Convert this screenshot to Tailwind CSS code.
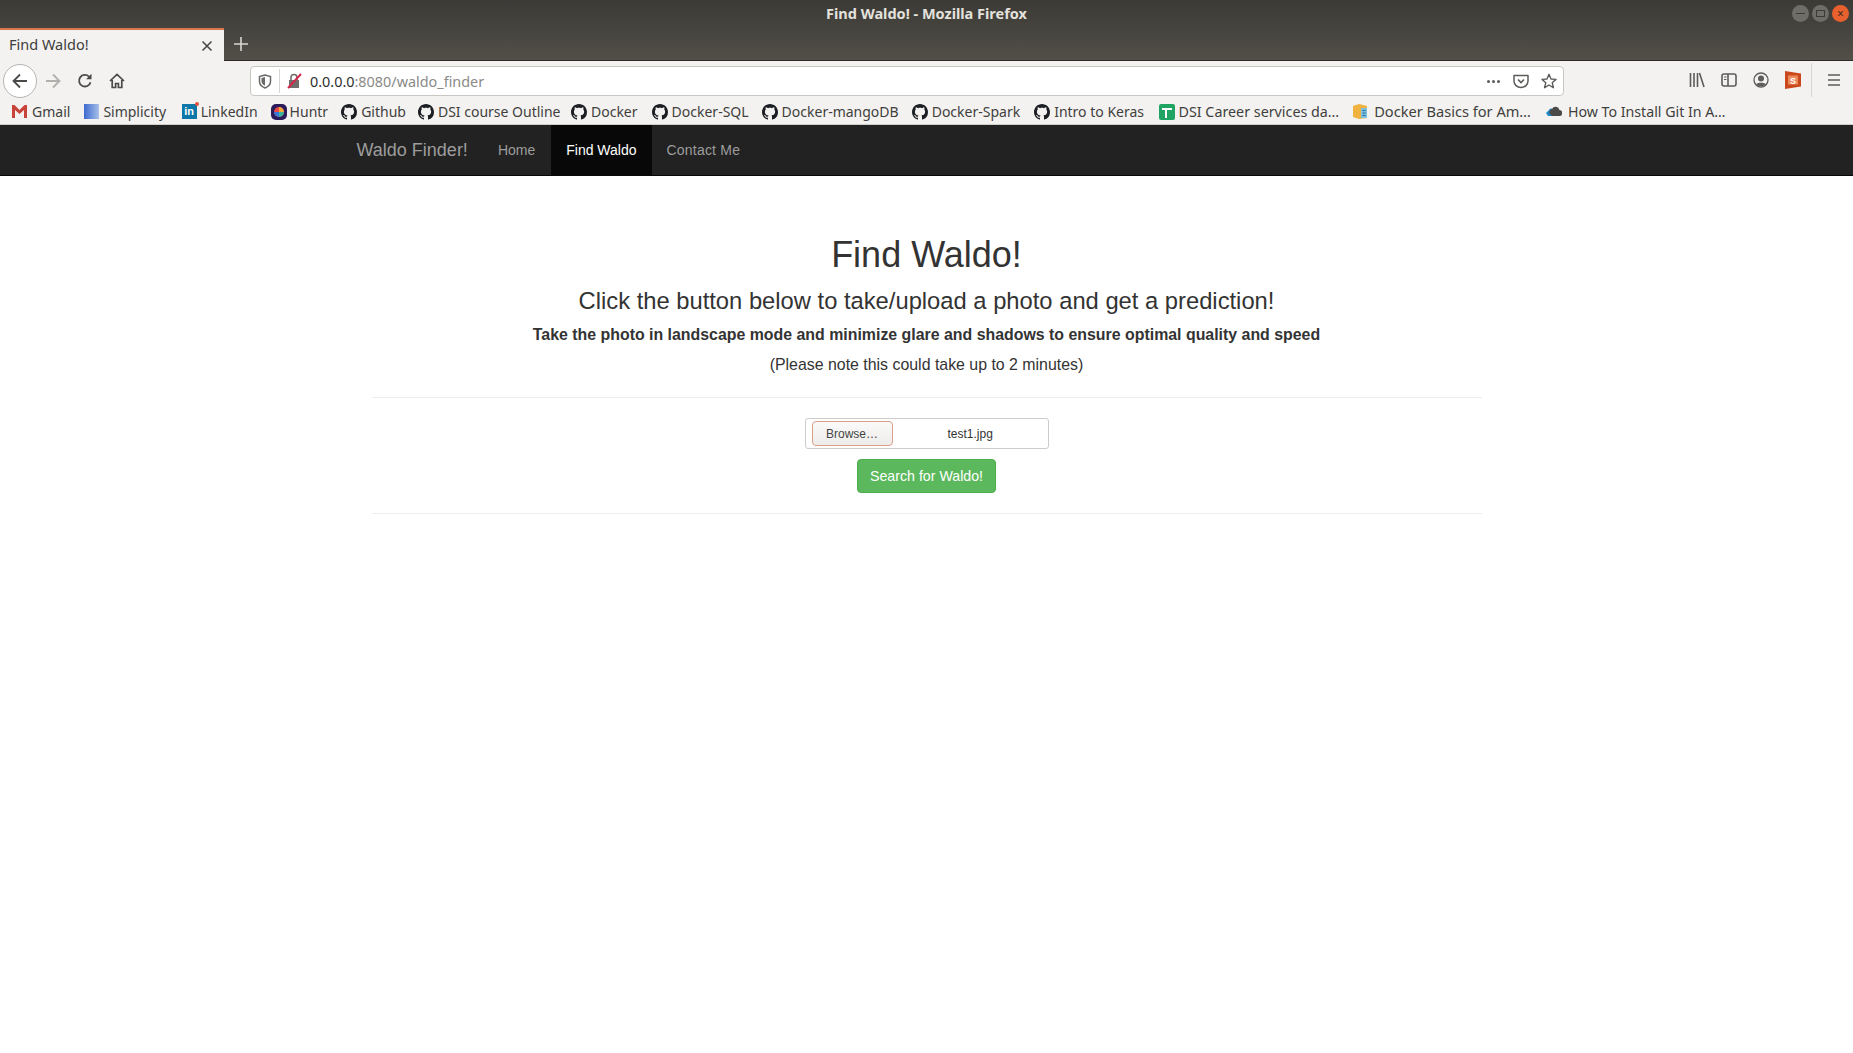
<!DOCTYPE html>
<html lang="en">
  <head>
    <meta charset="UTF-8" />
    <meta name="viewport" content="width=device-width, initial-scale=1.0" />
    <script src="https://cdn.jsdelivr.net/npm/@tailwindcss/browser@4"></script>
    <title>Find Waldo!</title>
  </head>
  <body class="bg-white overflow-hidden [font-family:'Liberation_Sans',sans-serif]">
    <svg class="hidden">
      <symbol id="gh" viewBox="0 0 16 16">
        <path fill="#1b1f23" d="M8 0C3.58 0 0 3.58 0 8c0 3.54 2.29 6.53 5.47 7.59.4.07.55-.17.55-.38 0-.19-.01-.82-.01-1.49-2.01.37-2.53-.49-2.69-.94-.09-.23-.48-.94-.82-1.13-.28-.15-.68-.52-.01-.53.63-.01 1.08.58 1.23.82.72 1.21 1.87.87 2.33.66.07-.52.28-.87.51-1.07-1.78-.2-3.64-.89-3.64-3.95 0-.87.31-1.59.82-2.15-.08-.2-.36-1.02.08-2.12 0 0 .67-.21 2.2.82.64-.18 1.32-.27 2-.27.68 0 1.36.09 2 .27 1.53-1.04 2.2-.82 2.2-.82.44 1.1.16 1.92.08 2.12.51.56.82 1.27.82 2.15 0 3.07-1.87 3.75-3.65 3.95.29.25.54.73.54 1.48 0 1.07-.01 1.93-.01 2.2 0 .21.15.46.55.38A8.013 8.013 0 0016 8c0-4.42-3.58-8-8-8z"/>
      </symbol>
    </svg>

    <!-- browser chrome -->
    <div class="h-[125px] [font-family:'Noto_Sans',sans-serif]">
      <!-- title bar + tabs -->
      <div class="relative h-[61px] bg-linear-to-b from-[#3b3a36] to-[#524f48] border-b border-[#2c2b28]">
        <p class="absolute top-0 inset-x-0 h-[27px] leading-[27px] text-center text-[14.5px] font-bold text-[#e4e2dc]">Find Waldo! - Mozilla Firefox</p>
        <div class="absolute right-[4px] top-[5px] flex gap-[3px]">
          <div class="w-[17px] h-[17px] rounded-full bg-[#6f6d67] flex items-center justify-center"><div class="w-[9px] h-[1.5px] bg-[#3c3b37]"></div></div>
          <div class="w-[17px] h-[17px] rounded-full bg-[#6f6d67] flex items-center justify-center"><div class="w-[9px] h-[7px] border border-[#3c3b37]"></div></div>
          <div class="w-[17px] h-[17px] rounded-full bg-[#e9602f] flex items-center justify-center text-[#3c2a20] text-[12px] leading-none">×</div>
        </div>
        <div class="absolute left-0 bottom-[-1px] top-[28px] flex items-center">
          <div class="w-[224px] h-full bg-[#f4f2f0] border-t-[2px] border-[#d9784f] flex items-center justify-between pl-[9px] pr-[11px] pb-[2px] text-[#3d3d3b] text-[14.5px]">
            <span>Find Waldo!</span>
            <svg class="w-[12px] h-[12px] mt-[2px]" viewBox="0 0 12 12"><path d="M1.5 1.5l9 9M10.5 1.5l-9 9" stroke="#444" stroke-width="1.5"/></svg>
          </div>
          <svg class="ml-[9px] mb-[2px] w-[16px] h-[16px]" viewBox="0 0 16 16"><path d="M8 1v14M1 8h14" stroke="#d8d6d0" stroke-width="1.6"/></svg>
        </div>
      </div>

      <!-- toolbar -->
      <div class="h-[38px] bg-[#f4f2f0] flex items-center relative">
        <div class="ml-[3px] mt-[1px] w-[34px] h-[34px] rounded-full bg-white border border-[#b6b4b0] flex items-center justify-center">
          <svg class="w-[18px] h-[18px]" viewBox="0 0 18 18" fill="none"><path d="M16 9H2.5M9 2.5 2.5 9 9 15.5" stroke="#4a4a48" stroke-width="1.8"/></svg>
        </div>
        <svg class="ml-[7px] mt-[1px] w-[18px] h-[18px]" viewBox="0 0 18 18" fill="none"><path d="M2 9h13.500M9 2.500 15.500 9 9 15.500" stroke="#b1b0ad" stroke-width="1.8"/></svg>
        <svg class="ml-[15px] mt-[1px] w-[16px] h-[16px]" viewBox="0 0 16 16" fill="none"><path d="M13.500 9.200A5.800 5.800 0 1 1 12 3.600" stroke="#4a4a48" stroke-width="1.8"/><path d="M14.500.8v5.400H9.100z" fill="#4a4a48"/></svg>
        <svg class="ml-[16px] mt-[1px] w-[16px] h-[16px]" viewBox="0 0 16 16" fill="none"><path d="M1 8 8 1.500 15 8M3.200 7v7.500h3.400v-4h2.800v4h3.400V7" stroke="#4a4a48" stroke-width="1.7"/></svg>

        <!-- url bar -->
        <div class="absolute left-[250px] top-[5px] w-[1314px] h-[30px] bg-white border border-[#c8c6c2] rounded-[4px] flex items-center">
          <svg class="ml-[7px] w-[14px] h-[15px]" viewBox="0 0 14 15" fill="none"><path d="M7 1 1.500 2.500v5c0 3 2.500 5.300 5.500 6.500 3-1.200 5.500-3.500 5.500-6.500v-5z" stroke="#6a6a68" stroke-width="1.5"/><path d="M7 3 3.500 4v3.500c0 1.800 1.500 3.300 3.500 4.200z" fill="#6a6a68"/></svg>
          <div class="ml-[7px] w-px h-[24px] bg-[#d8d6d2]"></div>
          <svg class="ml-[7px] w-[15px] h-[16px]" viewBox="0 0 15 16"><rect x="2" y="7" width="10" height="8" fill="#6e6e6c"/><path d="M4 7V4.500a3 3 0 0 1 6 0V7" fill="none" stroke="#6e6e6c" stroke-width="1.6"/><path d="M1 15 14 1" stroke="#d7264c" stroke-width="2"/></svg>
          <span class="ml-[8px] mt-[1px] text-[14.4px] text-[#2f2f2d]">0.0.0.0<span class="text-[#8a8a88]">:8080/waldo_finder</span></span>
          <div class="ml-auto mr-[6px] flex items-center">
            <div class="flex gap-[2px]"><i class="w-[3px] h-[3px] rounded-full bg-[#5c5c5a]"></i><i class="w-[3px] h-[3px] rounded-full bg-[#5c5c5a]"></i><i class="w-[3px] h-[3px] rounded-full bg-[#5c5c5a]"></i></div>
            <svg class="ml-[13px] w-[16px] h-[16px]" viewBox="0 0 16 16" fill="none"><path d="M1 2.500h14v5.500a7 6.500 0 0 1-14 0z" stroke="#5c5c5a" stroke-width="1.5" stroke-linejoin="round"/><path d="M5 6.500 8 9.500l3-3" stroke="#5c5c5a" stroke-width="1.7"/></svg>
            <svg class="ml-[12px] w-[16px] h-[16px]" viewBox="0 0 16 16" fill="none"><path d="M8 1.300 10 6l5 .4-3.800 3.300 1.200 5L8 12l-4.400 2.700 1.200-5L1 6.400 6 6z" stroke="#5c5c5a" stroke-width="1.4" stroke-linejoin="round"/></svg>
          </div>
        </div>

        <!-- right icons -->
        <div class="ml-auto flex items-center mr-[12px]">
          <svg class="w-[16px] h-[16px]" viewBox="0 0 16 16" fill="none"><path d="M1.500 1v14M5 1v14M8.500 1v14M10.500 1l4.500 14" stroke="#5c5c5a" stroke-width="1.6"/></svg>
          <svg class="ml-[16px] w-[16px] h-[16px]" viewBox="0 0 16 16" fill="none"><rect x="1" y="2" width="14" height="12" rx="2" stroke="#5c5c5a" stroke-width="1.6"/><path d="M7 2v12" stroke="#5c5c5a" stroke-width="1.6"/><path d="M3 5h2.500M3 7.500h2.500" stroke="#5c5c5a"/></svg>
          <svg class="ml-[16px] w-[16px] h-[16px]" viewBox="0 0 16 16" fill="none"><circle cx="8" cy="8" r="7" stroke="#5c5c5a" stroke-width="1.3"/><circle cx="8" cy="6.500" r="3" fill="#5c5c5a"/><path d="M3 12.500c1-2.500 9-2.500 10 0-1.500 2-8.500 2-10 0z" fill="#5c5c5a"/></svg>
          <svg class="ml-[16px] w-[16px] h-[18px]" viewBox="0 0 16 18"><path d="M0 0 16 2.500v13L0 18z" fill="#c9481c"/><rect x="3" y="4.500" width="10" height="9" fill="#ec8a5c"/><text x="8" y="12.500" text-anchor="middle" font-size="9" font-weight="bold" fill="#fff" font-family="Liberation Sans">S</text></svg>
          <div class="ml-[10px] w-px h-[34px] bg-[#d8d6d2]"></div>
          <svg class="ml-[15px] w-[14px] h-[14px]" viewBox="0 0 14 14"><path d="M1 2h12M1 7h12M1 12h12" stroke="#5c5c5a" stroke-width="1.7"/></svg>
        </div>
      </div>

      <!-- bookmarks -->
      <div class="h-[26px] bg-[#f4f2f0] border-b border-[#d0cecb] flex items-center pl-[12px] gap-[13px] text-[14px] text-[#3f3f3d] whitespace-nowrap">
        <div class="flex items-center gap-[5px]"><svg class="w-[15px] h-[13px]" viewBox="0 0 15 13"><path d="M0 0h2.500L7.500 5l5-5H15v13h-3V5L7.500 9 3 5v8H0z" fill="#c8443a"/></svg><span>Gmail</span></div>
        <div class="ml-[1px] flex items-center gap-[4px]"><div class="w-[15px] h-[15px] bg-linear-to-r from-[#3f6ad0] to-[#a8bfe8]"></div><span>Simplicity</span></div>
        <div class="ml-[2.5px] flex items-center gap-[4px]">
          <div class="relative w-[15px] h-[15px] bg-[#0d78a8] text-white text-[11px] font-bold leading-[15px] text-center [font-family:'Liberation_Sans',sans-serif]">in<i class="absolute -top-[2px] -right-[2px] w-[4px] h-[4px] rounded-full bg-[#e0503c]"></i></div>
          <span>LinkedIn</span>
        </div>
        <div class="flex items-center gap-[3px]">
          <svg class="w-[16px] h-[16px]" viewBox="0 0 16 16"><rect width="16" height="16" rx="5" fill="#2a1c5a"/><circle cx="8" cy="8" r="5" fill="#e84a4a"/><path d="M8 3a5 5 0 0 1 5 5H8z" fill="#f2a93b"/><path d="M8 8h5a5 5 0 0 1-5 5z" fill="#3bb6a0"/><path d="M8 8v5a5 5 0 0 1-5-5z" fill="#3a78d8"/></svg>
          <span>Huntr</span>
        </div>
        <div class="flex items-center gap-[4px]"><svg class="w-[16px] h-[16px]"><use href="#gh"/></svg><span>Github</span></div>
        <div class="-ml-[1px] flex items-center gap-[4px]"><svg class="w-[16px] h-[16px]"><use href="#gh"/></svg><span>DSI course Outline</span></div>
        <div class="-ml-[2.5px] flex items-center gap-[4px]"><svg class="w-[16px] h-[16px]"><use href="#gh"/></svg><span>Docker</span></div>
        <div class="ml-[1px] flex items-center gap-[4px]"><svg class="w-[16px] h-[16px]"><use href="#gh"/></svg><span>Docker-SQL</span></div>
        <div class="flex items-center gap-[4px]"><svg class="w-[16px] h-[16px]"><use href="#gh"/></svg><span>Docker-mangoDB</span></div>
        <div class="flex items-center gap-[4px]"><svg class="w-[16px] h-[16px]"><use href="#gh"/></svg><span>Docker-Spark</span></div>
        <div class="ml-[1px] flex items-center gap-[4px]"><svg class="w-[16px] h-[16px]"><use href="#gh"/></svg><span>Intro to Keras</span></div>
        <div class="ml-[1.5px] flex items-center gap-[4px]">
          <svg class="w-[16px] h-[16px]" viewBox="0 0 16 16"><rect width="16" height="16" rx="2" fill="#1fa463"/><path d="M3 5h10M7 5v9" stroke="#fff" stroke-width="2"/></svg>
          <span class="text-[14.3px]">DSI Career services da…</span>
        </div>
        <div class="flex items-center gap-[6px]">
          <svg class="w-[16px] h-[16px]" viewBox="0 0 16 16"><path d="M1 3 7 1l8 2v12l-8 1-6-2z" fill="#f0b23e"/><path d="M9 5h6v10H9z" fill="#7cc0e0"/><path d="M10.500 7.500h3M10.500 10h3M10.500 12.500h3" stroke="#2a6f9a"/></svg>
          <span class="text-[14.6px]">Docker Basics for Am…</span>
        </div>
        <div class="ml-[2px] flex items-center gap-[6px]">
          <svg class="w-[16px] h-[12px]" viewBox="0 0 16 12"><path d="M0 8 5 3l4 5-3 3H2z" fill="#1e88c8"/><path d="M4 9a3 3 0 0 1 2-5 4 4 0 0 1 7.500 1A3 3 0 0 1 13 11H6z" fill="#4a4a4a"/></svg>
          <span class="text-[14.2px]">How To Install Git In A…</span>
        </div>
      </div>
    </div>

    <!-- navbar -->
    <nav class="h-[51px] bg-[#222] border-b border-[#080808]">
      <div class="w-[1170px] mx-auto pl-[15px] pr-[15px] flex h-[50px]">
        <a class="leading-[50px] text-[18px] text-[#9d9d9d] pr-[15px]">Waldo Finder!</a>
        <a class="pl-[15px] pr-[16px] leading-[50px] text-[14px] text-[#9d9d9d]">Home</a>
        <a class="px-[15px] leading-[50px] text-[14px] text-white bg-[#080808]">Find Waldo</a>
        <a class="px-[15px] leading-[50px] text-[14px] tracking-[0.2px] text-[#9d9d9d]">Contact Me</a>
      </div>
    </nav>

    <!-- main -->
    <main class="w-[1110px] mx-auto text-center text-[#333] pt-[59px]">
      <h1 class="text-[36px] leading-[40px]">Find Waldo!</h1>
      <h3 class="mt-[13px] text-[23.75px] leading-[26px]">Click the button below to take/upload a photo and get a prediction!</h3>
      <p class="mt-[10px] text-[15.9px] leading-[22px] font-bold">Take the photo in landscape mode and minimize glare and shadows to ensure optimal quality and speed</p>
      <p class="mt-[8px] text-[15.9px] leading-[22px]">(Please note this could take up to 2 minutes)</p>
      <hr class="mt-[21px] border-[#eee]" />
      <form class="flex flex-col items-center pt-[20px] pb-[20px]">
        <div class="w-[244px] h-[31px] border border-[#ccc] rounded-[3px] flex items-center pl-[6px] text-[12px]">
          <div class="w-[81px] h-[25px] leading-[24px] rounded-[4px] border border-[#d9a08c] bg-linear-to-b from-[#fafafa] to-[#eeecea] text-[#444]">Browse…</div>
          <span class="ml-[55px] text-[#333]">test1.jpg</span>
        </div>
        <button type="button" class="mt-[10px] w-[139px] h-[34px] pt-[1px] rounded-[4px] bg-[#5cb85c] border border-[#4cae4c] text-white text-[14.2px]">Search for Waldo!</button>
      </form>
      <hr class="border-[#eee]" />
    </main>
  </body>
</html>
